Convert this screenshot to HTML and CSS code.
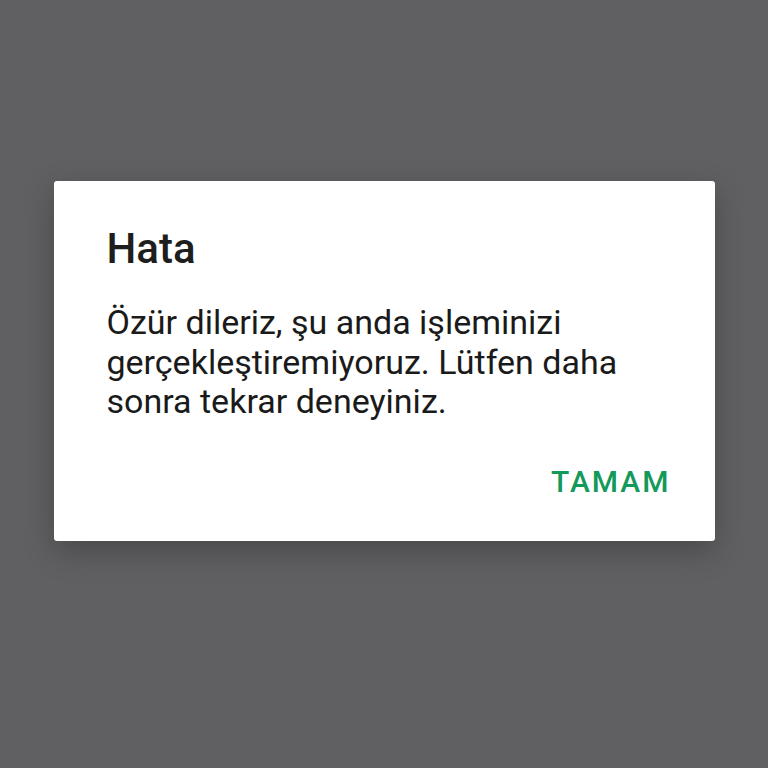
FILE: index.html
```html
<!DOCTYPE html>
<html lang="tr">
<head>
  <meta charset="UTF-8" />
  <meta name="viewport" content="width=device-width, initial-scale=1.0"/>
  <title>Hata</title>
  <link rel="stylesheet" href="styles.css">
</head>
<body>

  <div class="dialog">
    <h2 class="dialog-title">Hata</h2>
    <p class="dialog-message">Özür dileriz, şu anda işleminizi gerçekleştiremiyoruz. Lütfen daha sonra tekrar deneyiniz.</p>
    <div class="dialog-actions">
      <button type="button">TAMAM</button>
    </div>
  </div>

</body>
</html>
```

FILE: styles.css
```css
body {
  margin: 0;
  padding: 181px 0 0;
  height: 100vh;
  box-sizing: border-box;
  background: #606062;
  display: flex;
  justify-content: center;
  align-items: flex-start;
  font-family: Roboto, 'Liberation Sans', sans-serif;
}

.dialog {
  background: #fff;
  width: 661px;
  box-sizing: border-box;
  padding: 43px 44px 43px 53px;
  border-radius: 3px;
  box-shadow: 0 10px 30px rgba(0, 0, 0, 0.25);
}

.dialog-title {
  margin: 0;
  font-size: 42px;
  line-height: 50px;
  font-weight: 500;
  color: #1e1e1e;
}

.dialog-message {
  margin: 29px 0 0;
  font-size: 34px;
  line-height: 39.5px;
  color: #1a1a1a;
}

.dialog-actions {
  display: flex;
  justify-content: flex-end;
  margin-top: 44px;
}

button {
  padding: 0;
  border: none;
  background: none;
  font-family: inherit;
  font-size: 30px;
  line-height: 32px;
  font-weight: 500;
  letter-spacing: 2px;
  color: #13995a;
  cursor: pointer;
}
```
